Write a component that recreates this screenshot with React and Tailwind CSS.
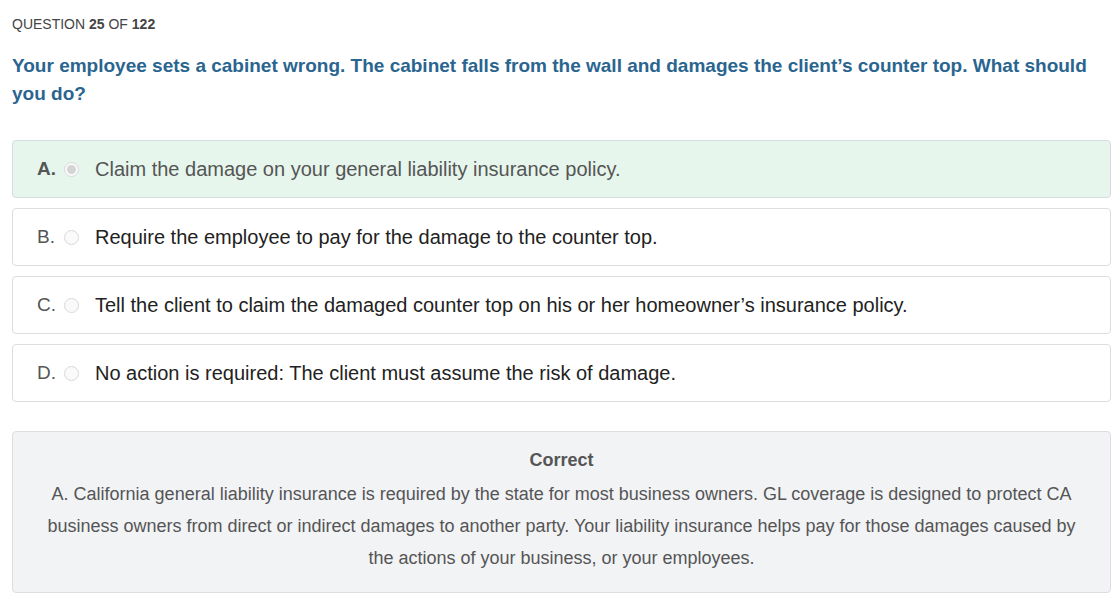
const OPTIONS = [
  { key: 'A', text: 'Claim the damage on your general liability insurance policy.', selected: true },
  { key: 'B', text: 'Require the employee to pay for the damage to the counter top.' },
  { key: 'C', text: 'Tell the client to claim the damaged counter top on his or her homeowner’s insurance policy.' },
  { key: 'D', text: 'No action is required: The client must assume the risk of damage.' }
]

const Radio = ({ checked }) => (
  <span className="w-[15px] h-[15px] rounded-full border border-[#d9d9d9] bg-[#fafafa] flex items-center justify-center shrink-0">
    {checked && <span className="w-[9px] h-[9px] rounded-full bg-[#d4d4d4]" />}
  </span>
)

const Option = ({ option }) => (
  <div
    className={
      'flex items-center h-[58px] pl-[24px] rounded border ' +
      (option.selected ? 'bg-[#e6f6ec] border-[#d6dde0]' : 'bg-white border-[#dcdde0]')
    }
  >
    <span className={'text-[19px] text-[#555] w-[27px] ' + (option.selected ? 'font-bold' : '')}>
      {option.key}.
    </span>
    <Radio checked={option.selected} />
    <span className={'text-[20px] ml-[16px] ' + (option.selected ? 'text-[#555]' : 'text-[#222]')}>
      {option.text}
    </span>
  </div>
)

export default function App() {
  return (
    <div className="bg-white min-h-screen pl-[12px] pr-[9px] pt-[15px] pb-[10px]" style={{ fontFamily: '"Liberation Sans", Arial, sans-serif' }}>
      <div className="text-[14px] text-[#444] uppercase leading-[18px]">
        Question <span className="font-bold">25</span> of <span className="font-bold">122</span>
      </div>

      <h1 className="mt-[19px] text-[19px] font-bold leading-[28px] text-[#2a6590]">
        Your employee sets a cabinet wrong. The cabinet falls from the wall and damages the client’s counter top. What should you do?
      </h1>

      <div className="mt-[32px] flex flex-col gap-[10px]">
        {OPTIONS.map(o => (
          <Option key={o.key} option={o} />
        ))}
      </div>

      <div className="mt-[29px] bg-[#f2f3f5] border border-[#dcdde0] rounded px-[30px] pt-[16px] pb-[18px] text-center text-[#555]">
        <div className="text-[18px] font-bold leading-[24px]">Correct</div>
        <p className="mt-[6px] text-[18px] leading-[32px]">
          A. California general liability insurance is required by the state for most business owners. GL coverage is designed to protect CA business owners from direct or indirect damages to another party. Your liability insurance helps pay for those damages caused by the actions of your business, or your employees.
        </p>
      </div>
    </div>
  )
}
